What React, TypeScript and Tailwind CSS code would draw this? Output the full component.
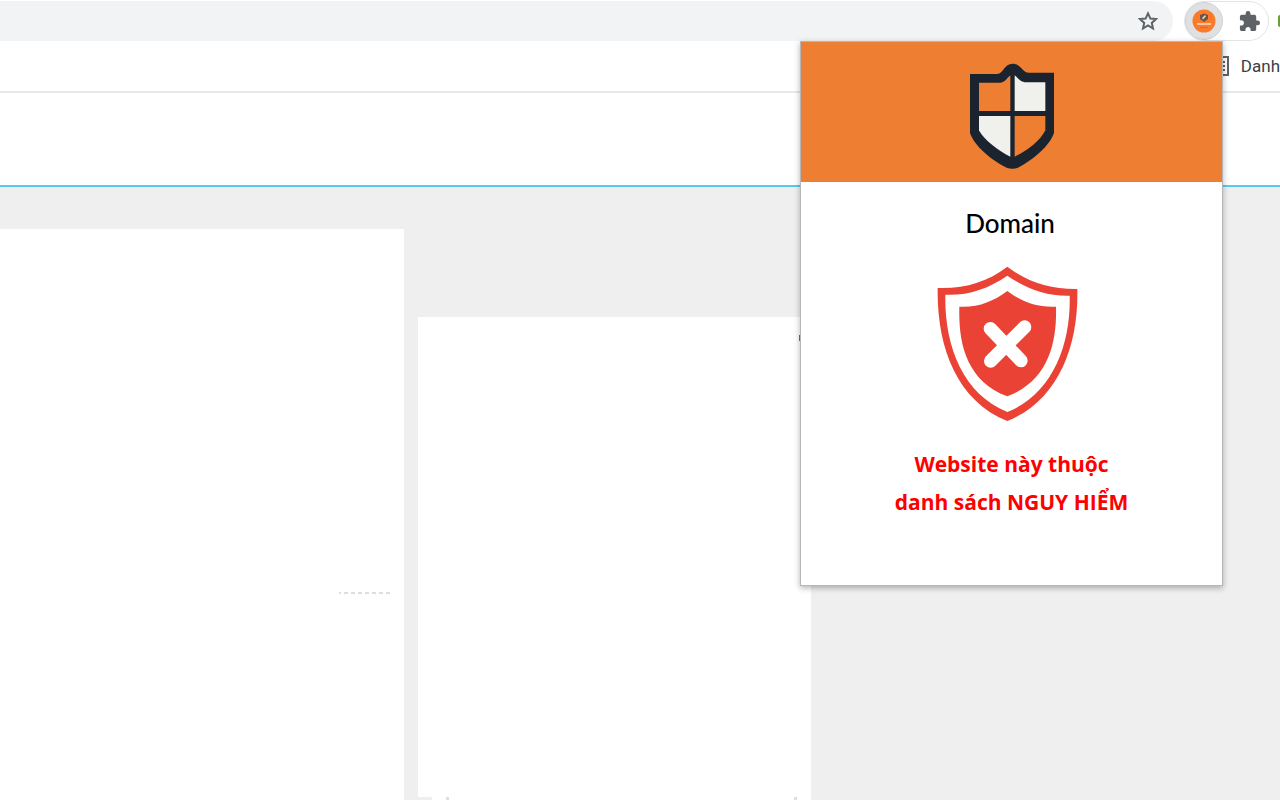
import { MdExtension } from "react-icons/md";

function BrandShield() {
  return (
    <svg className="h-[106px] w-[86px]" viewBox="87 70 258 318" role="img" aria-label="Shield logo">
      <path
        d="M90 103H172C190 102 192 72 218 72C244 72 246 99 267 99H342V280C330 316 284 358 234 384Q217 390 200 384C148 358 102 316 90 280Z"
        fill="#1a232e"
      />
      <path d="M117 129H178C195 130 200 116 211 107V214H117Z" fill="#ee7f32" />
      <path d="M224 107C235 115 241 128 260 128H316V214H224Z" fill="#f0f0ec" />
      <path d="M117 229H211V351C174 334 130 298 117 272Z" fill="#f0f0ec" />
      <path d="M224 229H316V272C302 301 262 334 224 351Z" fill="#ee7f32" />
    </svg>
  );
}

function DangerShield() {
  return (
    <svg className="h-[155px] w-[150px]" viewBox="51 198 450 465" role="img" aria-label="Dangerous website">
      <path
        d="M262 200C322 246 392 268 472 267C476 440 414 602 262 663C110 602 50 440 53 264C133 267 202 246 262 200Z"
        fill="#ea4335"
      />
      <path
        d="M262 227C322 268 382 289 449 287C453 435 397 582 262 636C127 582 73 435 76 284C142 287 202 268 262 227Z"
        fill="#fff"
      />
      <path
        d="M262 273C305 305 351 323 408 320C411 430 385 542 262 589C139 542 115 430 118 320C174 323 219 305 262 273Z"
        fill="#ea4335"
      />
      <path
        d="M211 386L303 482M314 381L212 483"
        fill="none"
        stroke="#fff"
        strokeWidth="40"
        strokeLinecap="round"
      />
    </svg>
  );
}

function StarIcon() {
  return (
    <svg className="size-6" viewBox="0 0 24 24" fill="none" stroke="currentColor" strokeWidth="2" aria-hidden="true">
      <path d="M12 4.300 14.400 9.600 20 10.100 15.800 13.900 17 19.500 12 16.500 7 19.500 8.200 13.900 4 10.100 9.600 9.600Z" />
    </svg>
  );
}

function ExtensionIcon() {
  return (
    <svg className="size-6" viewBox="0 0 24 24" aria-hidden="true">
      <circle cx="12" cy="12" r="11.5" fill="#fb7a2c" />
      <path d="M8 6 12 4.500 16 6v4L12 13 8 10Z" fill="#6b5548" />
      <path d="m10 9 3-3 1 1.500-3 3Z" fill="#e9c9b2" />
      <path d="M5 15h14" stroke="#ffc49e" strokeWidth="2" />
      <path d="M8 18.500h8" stroke="#d96a28" strokeWidth="1" />
    </svg>
  );
}

function BrowserBar() {
  return (
    <header className="flex h-[41px] items-start overflow-hidden pt-px">
      <div className="flex h-10 flex-1 items-center justify-end rounded-r-full bg-[#f1f3f4] pr-[13px]">
        <button type="button" aria-label="Bookmark this page" className="text-[#5f6368]">
          <StarIcon />
        </button>
      </div>
      <div className="ml-[11px] flex h-10 w-[85px] items-center justify-between rounded-full border border-[#e3e4e6] pr-[7px]">
        <button
          type="button"
          aria-label="Website safety"
          className="flex size-[38px] items-center justify-center rounded-full border border-[#cfd0d1] bg-[#dfe0e1]"
        >
          <ExtensionIcon />
        </button>
        <button type="button" aria-label="Extensions" className="text-[#5f6368]">
          <MdExtension className="size-[23px]" />
        </button>
      </div>
      <div className="flex h-10 w-[11px] items-center justify-end overflow-hidden">
        <span className="h-3 w-[2px] rounded-l-full bg-[#689f38]" />
      </div>
    </header>
  );
}

function BookmarksBar() {
  return (
    <nav className="flex h-[52px] items-center justify-end border-b-2 border-[#e6e8eb]">
      <a
        href="#reading-list"
        className="flex items-center gap-3 whitespace-nowrap font-['Roboto','Noto_Sans',sans-serif] text-[17px] leading-6 text-[#3c4043]"
      >
        <svg className="size-5" viewBox="0 0 20 20" fill="none" stroke="#5f6368" strokeWidth="2" aria-hidden="true">
          <path d="M1 1h18v18H1ZM5 6h11M5 10h11M5 14h11" />
        </svg>
        Danh
      </a>
    </nav>
  );
}

function Popup() {
  return (
    <section
      aria-label="Website safety"
      className="absolute right-[57px] top-[41px] w-[423px] border border-[#b6b7b8] bg-white pb-[64px] text-center shadow-[0_2px_6px_rgba(0,0,0,0.3)]"
    >
      <div className="flex h-[140px] justify-center bg-[#ee7f32] pt-[21px]">
        <BrandShield />
      </div>
      <h1 className="pr-[3px] pt-[25px] font-['Lato','Noto_Sans',sans-serif] text-[26px] font-medium leading-8 text-black">
        Domain
      </h1>
      <div className="mt-[27px] flex justify-center">
        <DangerShield />
      </div>
      <p className="mt-[24px] font-['Open_Sans','Noto_Sans',sans-serif] text-[21px] font-bold leading-[38px] text-[#ff0000]">
        Website này thuộc
        <br />
        danh sách NGUY HIỂM
      </p>
    </section>
  );
}

export default function App() {
  return (
    <div className="relative flex h-screen flex-col overflow-hidden bg-white font-['Open_Sans','Noto_Sans',sans-serif]">
      <BrowserBar />
      <BookmarksBar />
      <div className="h-[94px] shrink-0 border-b-2 border-[#55cbef]" />
      <main className="flex min-h-0 flex-1 items-stretch bg-[#efefef]">
        <div className="mt-[42px] flex w-[404px] justify-end bg-white pr-[14px] pt-[363px]">
          <svg className="h-[2px] w-[51px]" viewBox="0 0 51 2" aria-hidden="true">
            <path d="M0 1h51" stroke="#dedede" strokeWidth="2" strokeDasharray="4 3" strokeDashoffset="2" />
          </svg>
        </div>
        <div className="ml-[14px] mt-[130px] flex w-[393px] flex-col justify-between bg-white pt-[18px]">
          <span className="mr-[10px] h-[6px] w-[2px] self-end bg-[#6b7280]" />
          <div className="flex">
            <span className="h-[3px] w-[14px] bg-[#efefef]" />
            <span className="ml-[14px] h-[3px] w-[3px] bg-[#dedede]" />
            <span className="ml-auto mr-[14px] h-[3px] w-[3px] bg-[#dedede]" />
          </div>
        </div>
      </main>
      <Popup />
    </div>
  );
}
